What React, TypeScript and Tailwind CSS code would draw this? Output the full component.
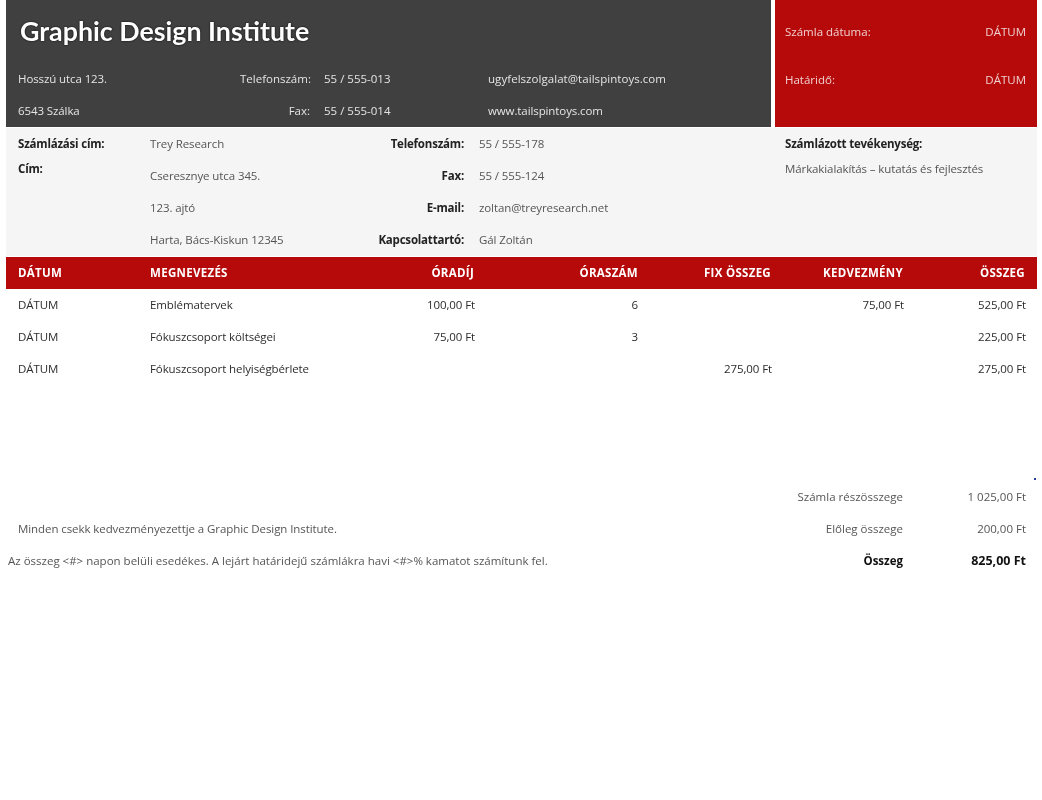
const font = "font-['Open_Sans',sans-serif]";

const lines = [
  { date: "DÁTUM", name: "Emblématervek", rate: "100,00 Ft", hours: "6", fixed: "", discount: "75,00 Ft", total: "525,00 Ft" },
  { date: "DÁTUM", name: "Fókuszcsoport költségei", rate: "75,00 Ft", hours: "3", fixed: "", discount: "", total: "225,00 Ft" },
  { date: "DÁTUM", name: "Fókuszcsoport helyiségbérlete", rate: "", hours: "", fixed: "275,00 Ft", discount: "", total: "275,00 Ft" },
];

const tableCols = "grid grid-cols-[132px_220px_128px_164px_133px_132px_122px]";
const strong = "font-bold tracking-[-0.2px] text-[#222]";

function CompanyHeader() {
  return (
    <header className="flex h-[127px] gap-[4px]">
      <div className="flex w-[765px] flex-col bg-[#404040] text-[#e4e4e4]">
        <h1 className="flex h-[63px] items-center pl-[14px] font-['Lato',sans-serif] text-[26.8px] leading-none font-bold text-white [text-shadow:0_0_2px_#000]">
          Graphic Design Institute
        </h1>
        <div className="grid h-[64px] grid-cols-[234px_70px_164px_1fr] grid-rows-2 items-center text-[11.5px] leading-none">
          <span className="pl-[12px] tracking-[-0.1px]">Hosszú utca 123.</span>
          <span className="text-right whitespace-nowrap">Telefonszám:</span>
          <span className="pl-[14px]">55 / 555-013</span>
          <span className="pl-[14px] tracking-[0.05px]">ugyfelszolgalat@tailspintoys.com</span>
          <span className="pl-[12px] tracking-[-0.1px]">6543 Szálka</span>
          <span className="text-right">Fax:</span>
          <span className="pl-[14px]">55 / 555-014</span>
          <span className="pl-[14px] tracking-[-0.1px]">www.tailspintoys.com</span>
        </div>
      </div>
      <div className="flex w-[262px] flex-col gap-[16px] bg-[#b60a0a] pt-[24px] pr-[11px] pl-[10px] text-[11.5px] leading-[16px] text-[#f0d0d0]">
        <div className="flex justify-between">
          <span>Számla dátuma:</span>
          <span>DÁTUM</span>
        </div>
        <div className="flex justify-between pt-[16px]">
          <span>Határidő:</span>
          <span>DÁTUM</span>
        </div>
      </div>
    </header>
  );
}

function BillingInfo() {
  return (
    <section className="mt-[1px] grid h-[128px] grid-cols-[132px_190px_136px_313px_1fr] grid-rows-4 items-center bg-[#f5f5f5] text-[11.5px] leading-none tracking-[-0.1px] text-[#555]">
      <span className={`pl-[12px] ${strong}`}>Számlázási cím:</span>
      <span className="pl-[12px]">Trey Research</span>
      <span className={`text-right ${strong}`}>Telefonszám:</span>
      <span className="pl-[15px]">55 / 555-178</span>
      <span className={`pl-[8px] whitespace-nowrap ${strong}`}>Számlázott tevékenység:</span>

      <span className={`-mt-[14px] pl-[12px] ${strong}`}>Cím:</span>
      <span className="pl-[12px]">Cseresznye utca 345.</span>
      <span className={`text-right ${strong}`}>Fax:</span>
      <span className="pl-[15px]">55 / 555-124</span>
      <span className="-mt-[14px] pl-[8px] whitespace-nowrap">Márkakialakítás – kutatás és fejlesztés</span>

      <span />
      <span className="pl-[12px]">123. ajtó</span>
      <span className={`text-right ${strong}`}>E-mail:</span>
      <span className="pl-[15px]">zoltan@treyresearch.net</span>
      <span />

      <span />
      <span className="pl-[12px]">Harta, Bács-Kiskun 12345</span>
      <span className={`text-right ${strong}`}>Kapcsolattartó:</span>
      <span className="pl-[15px]">Gál Zoltán</span>
      <span />
    </section>
  );
}

function LineItems() {
  return (
    <section className="mt-[1px]">
      <div className={`${tableCols} h-[32px] items-center bg-[#b60a0a] pb-[1px] text-[11.5px] leading-none font-bold tracking-[0.3px] text-white`}>
        <span className="pl-[12px]">DÁTUM</span>
        <span className="pl-[12px]">MEGNEVEZÉS</span>
        <span className="pr-[12px] text-right">ÓRADÍJ</span>
        <span className="pr-[12px] text-right">ÓRASZÁM</span>
        <span className="pr-[12px] text-right">FIX ÖSSZEG</span>
        <span className="pr-[12px] text-right">KEDVEZMÉNY</span>
        <span className="pr-[12px] text-right">ÖSSZEG</span>
      </div>
      {lines.map((line) => (
        <div key={line.name} className={`${tableCols} h-[32px] items-center pb-[1px] text-[11.5px] leading-none tracking-[-0.1px] text-[#2c2c2c]`}>
          <span className="pl-[12px]">{line.date}</span>
          <span className="pl-[12px]">{line.name}</span>
          <span className="pr-[11px] text-right">{line.rate}</span>
          <span className="pr-[12px] text-right">{line.hours}</span>
          <span className="pr-[11px] text-right">{line.fixed}</span>
          <span className="pr-[11px] text-right">{line.discount}</span>
          <span className="pr-[11px] text-right">{line.total}</span>
        </div>
      ))}
    </section>
  );
}

function Totals() {
  return (
    <section className="relative mt-[96px] flex text-[11.5px] leading-none text-[#555]">
      <span className="absolute top-[-3px] right-[1px] h-[2px] w-[2px] bg-[#2a3a9a]" />
      <div className="flex flex-1 flex-col pt-[32px]">
        <p className="flex h-[32px] items-center pl-[12px] tracking-[-0.08px]">Minden csekk kedvezményezettje a Graphic Design Institute.</p>
        <p className="flex h-[32px] items-center pl-[2px]">Az összeg &lt;#&gt; napon belüli esedékes. A lejárt határidejű számlákra havi &lt;#&gt;% kamatot számítunk fel.</p>
      </div>
      <div className="grid w-[254px] grid-cols-[132px_122px] grid-rows-[32px_32px_32px] items-center">
        <span className="pr-[12px] text-right">Számla részösszege</span>
        <span className="pr-[11px] text-right">1 025,00 Ft</span>
        <span className="pr-[12px] text-right">Előleg összege</span>
        <span className="pr-[11px] text-right">200,00 Ft</span>
        <span className="pr-[12px] text-right font-bold text-[#111]">Összeg</span>
        <span className="pr-[11px] text-right text-[12.5px] font-bold text-[#111]">825,00 Ft</span>
      </div>
    </section>
  );
}

export default function App() {
  return (
    <div className={`${font} h-[800px] w-[1042px] bg-white pr-[5px] pl-[6px] blur-[0.4px]`}>
      <CompanyHeader />
      <BillingInfo />
      <LineItems />
      <Totals />
    </div>
  );
}
